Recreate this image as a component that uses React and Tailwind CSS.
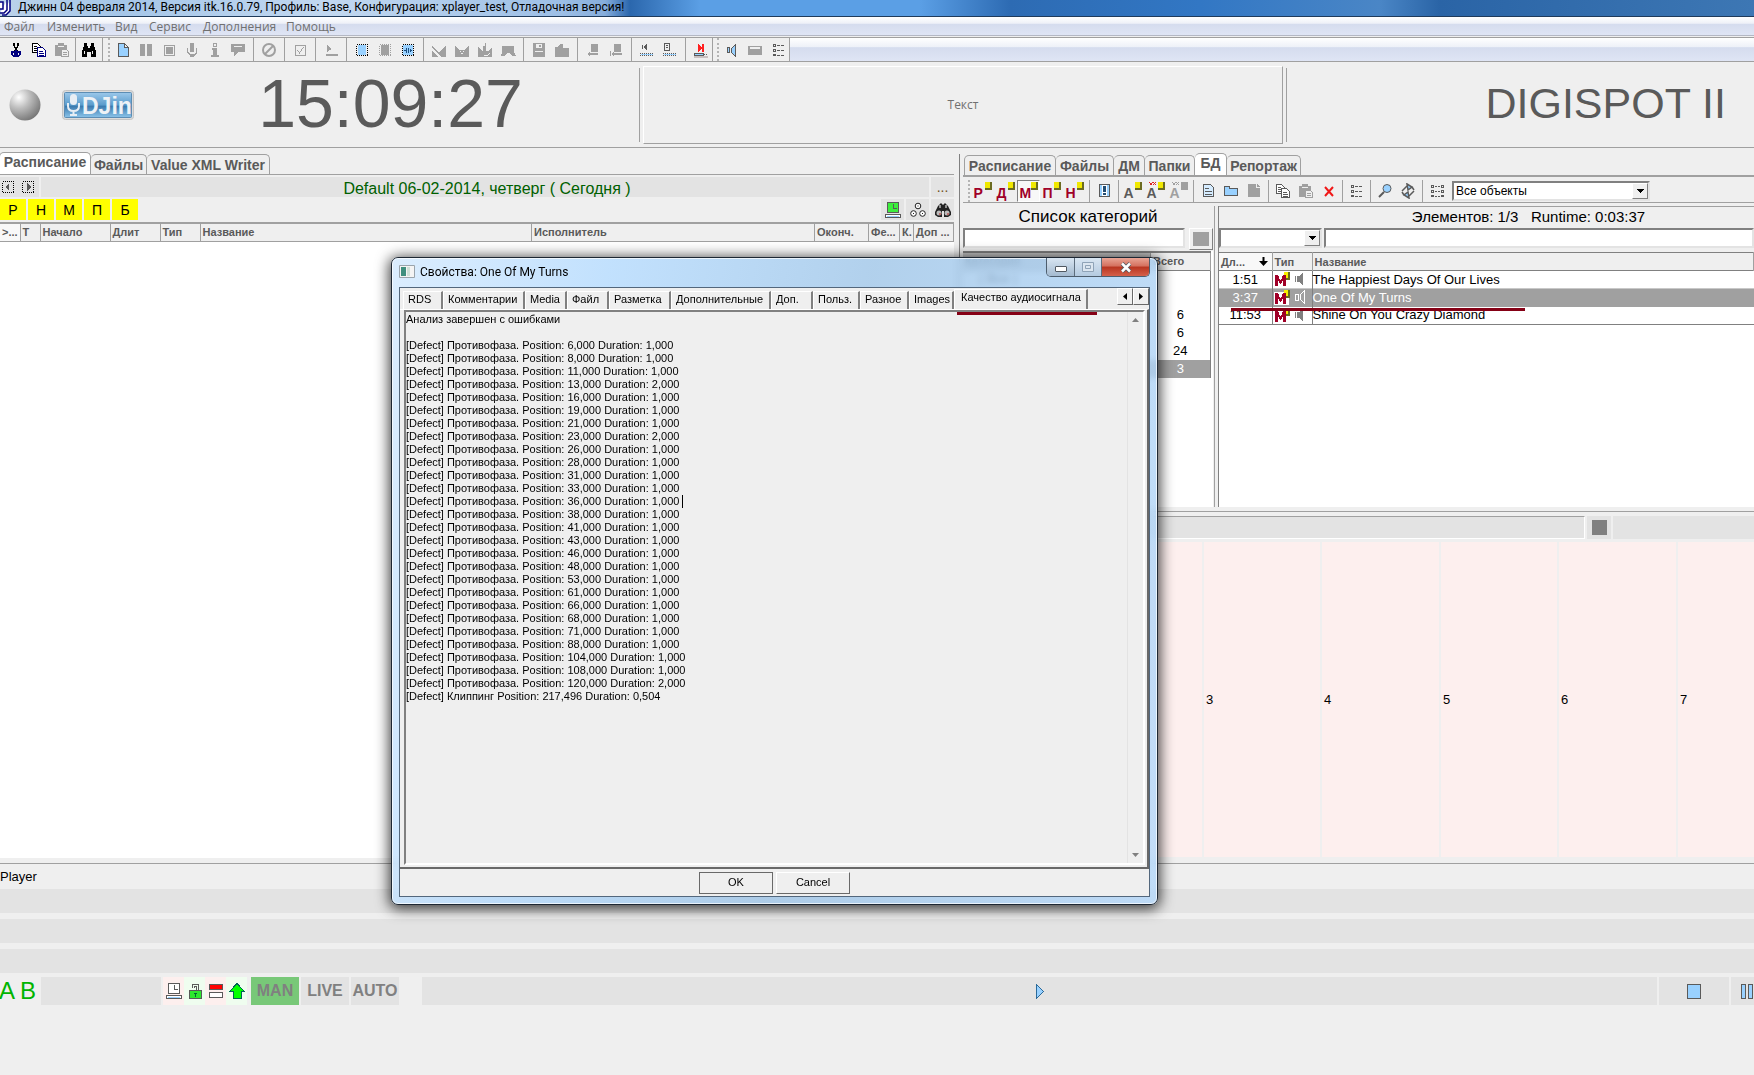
import clsx from "clsx";

const G = "#a0a0a0";
const D = "#5a5a5a";
const B = "#99d1ff";

// 16x16 toolbar glyphs
const ICONS = {
  cut: (
    <g fill="none" stroke="#000" strokeWidth="1.3">
      <path d="M6 1v3l4 6M10 1v3L6 10" />
      <path stroke="#000080" d="M7 9l-1 1H4v3l1 1h2v-4zM9 9l1 1h2v3l-1 1H9v-4z" />
    </g>
  ),
  copy: (
    <g fill="#fff" stroke="#000" strokeWidth="1">
      <path d="M1.500 1.500h5l3 3v6h-8z" />
      <path d="M3 4.500h3M3 6.500h4M3 8.500h3" />
      <path stroke="#000080" d="M6.500 5.500h5l3 3v6h-8z" />
      <path stroke="#000080" d="M8 9.500h4M8 11.500h5M8 13h5" />
    </g>
  ),
  copyGray: (
    <g fill="#fff" stroke={D} strokeWidth="1">
      <path d="M1.500 1.500h5l3 3v6h-8z" />
      <path d="M3 4.500h3M3 6.500h4M3 8.500h3" />
      <path d="M6.500 5.500h5l3 3v6h-8z" />
      <path d="M8 9.500h4M8 11.500h5M8 13h5" />
    </g>
  ),
  paste: (
    <g>
      <path fill={G} d="M1 3h3V1h6v2h3v11H1z" />
      <path fill="#efefef" d="M4 4h6v1H4z" />
      <path fill="#efefef" stroke={G} d="M7.500 7.500h5l2 2v5h-7z" />
      <path stroke={G} d="M9 10.500h4M9 12.500h4" />
    </g>
  ),
  find: (
    <path d="M3 1h3v3h1v2h2V4h1V1h3v3l2 5v6h-5v-5H6v5H1V9l2-5zM3 9v3h1V9zM11 9v3h1V9z" fillRule="evenodd" />
  ),
  file: <path fill={B} stroke={D} d="M3.500 1.500h6l4 4v9h-10z M9.500 1.500v4h4" />,
  pause: <path fill={G} d="M2 2h5v12H2zM9 2h5v12H9z" />,
  stop: (
    <g>
      <path fill="none" stroke={G} d="M3.500 3.500h10v10h-10z" />
      <path fill={G} d="M5 5h7v7H5z" />
    </g>
  ),
  mic: (
    <g fill={G}>
      <path d="M6 1h4v9H6z" />
      <path d="M3 6h1v4l2 2h4l2-2V6h1v5l-3 3v1H6v-1l-3-3z" />
    </g>
  ),
  info: <path fill={G} d="M6 1h4v4H6zM7 2v2h2V2zM5 6h5v7h2v2H4v-2h2V8H5z" fillRule="evenodd" />,
  comment: <path fill={G} d="M1 2h14v8H8l-4 5v-5H1zM4 4v1h8V4z" fillRule="evenodd" />,
  no: (
    <g fill="none" stroke={G} strokeWidth="2" shapeRendering="auto">
      <circle cx="8" cy="8" r="6" />
      <path d="M4 12l8-8" />
    </g>
  ),
  check: <path fill="none" stroke={G} d="M3.500 3.500h10v10h-10zM5.500 8l2 3 4-6" />,
  prompt: <path fill={G} d="M4 3l5 4-5 3zM3 12h12v2H3z" />,
  blockBlue: (
    <g>
      <path fill={B} d="M4 3h8v10H4z" />
      <path fill="none" stroke="#000" strokeDasharray="1 1" d="M2.500 2.500h11v11h-11z" />
    </g>
  ),
  blockGray: (
    <g>
      <path fill={G} d="M4 3h8v10H4z" />
      <path fill="none" stroke={G} strokeDasharray="1 1" d="M2.500 2.500h11v11h-11z" />
    </g>
  ),
  blockWave: (
    <g>
      <path fill={B} d="M3 3h10v10H3z" />
      <path fill="none" stroke="#000" strokeDasharray="1 1" d="M2.500 2.500h11v11h-11z" />
      <path fill="none" stroke="#1c4f80" d="M4 8.500h2M6.500 6v5M8.500 6v5M10.500 7v3M11 8.500h1" />
    </g>
  ),
  fadeIn: <path fill={G} d="M1 4l7 6 7-6v11h-4L1 6zM1 9v6h7z" />,
  fadeMix: <path fill={G} d="M1 4l4 3v1h6V7l4-3v11H1zM6 9v1h1V9zM9 9v1h1V9zM7 11v1h2v-1z" fillRule="evenodd" />,
  fadeDown: <path fill={G} d="M1 5l4 4h1V4h2V1h1v8h2l4-4v10H1zM4 11l3 3h3l3-3-3 2H7z" fillRule="evenodd" />,
  fadeTalk: <path fill={G} d="M2 4h12v6l2 4h-4l-2-3H7l-3 3H1l1-4z" />,
  save: <path fill={G} d="M2 1h12v14H2zM5 2v4h6V2zM8 3h2v2H8zM4 9v1h8V9z" fillRule="evenodd" />,
  bag: <path fill={G} d="M1 5h3l2-3h3v4h6v9H1z" />,
  stepOut: <path fill={G} d="M6 2h7v8H6zM2 12l3-2v1h8v2H5v1z" />,
  stepIn: <path fill={G} d="M6 2h7v8H6zM2 9h1v3l3-2v1h8v2H6v1l-3-2v2H2z" />,
  soundRow: (
    <g>
      <path fill={D} d="M3 3h1v4H3zM5 4l3-3v8L5 6z" />
      <path stroke={D} strokeDasharray="1 1" d="M1 11.500h14M1 13.500h14" />
      <path stroke={B} d="M2 12.500h12" />
    </g>
  ),
  listRow: (
    <g>
      <path fill="none" stroke={D} d="M2.500 1.500h5v7h-5zM4 3.500h2M4 5.500h2" />
      <path stroke={D} strokeDasharray="1 1" d="M1 11.500h14M1 13.500h14" />
      <path stroke={B} d="M2 12.500h12" />
    </g>
  ),
  playNext: (
    <g>
      <path fill="#ff2020" d="M5 2l4 4V2h2v8H9V6l-4 4z" />
      <path fill={B} stroke={D} d="M1.500 11.500h9v2h-9z" />
      <path stroke={D} strokeDasharray="1 1" d="M11 12.500h4" />
      <path fill="#c8c0c0" d="M1 14h14v2H1z" />
    </g>
  ),
  speaker: (
    <g fill={B} stroke={D}>
      <path d="M3.500 5.500h2v5h-2z" />
      <path d="M7.500 6.500l4-4v12l-4-4z" />
    </g>
  ),
  keyboard: <path fill={G} d="M1 4h14v9H1zM3 5v2h10V5z" fillRule="evenodd" />,
  list: (
    <g fill="none" stroke={D}>
      <path d="M3.500 2.500h2v2h-2zM3.500 7.500h2v2h-2zM3.500 12.500h2v1h-2z" />
      <path d="M7 3.500h3M11 3.500h3M7 8.500h3M11 8.500h3M7 13h3M11 13h3" />
    </g>
  ),
  alert: (
    <g>
      <path fill={B} stroke={D} d="M3.500 1.500h10v12h-10z" />
      <path fill="#fff" d="M6 2h5v11H6z" />
      <path fill="#234d72" d="M7 3h3v6H7zM7 10h3v2H7z" />
    </g>
  ),
  doc: (
    <g>
      <path fill="#d5ecff" stroke={D} d="M3.500 1.500h7l3 3v9h-10z" />
      <path stroke={D} d="M5 5.500h4M5 8.500h7M5 11.500h7" />
    </g>
  ),
  folder: <path fill={B} stroke={D} d="M1.500 12.500v-9h5v2h8v7z" />,
  fileGray: <path fill={G} d="M2 1h8v4h4v9H2zM11 1l3 3h-3z" />,
  remove: <path fill="none" stroke="#f01818" strokeWidth="2" shapeRendering="auto" d="M4 4l8 9M12 4l-8 9" />,
  zoom: (
    <g shapeRendering="auto">
      <circle cx="10" cy="5.500" r="4" fill={B} stroke={D} />
      <path stroke={D} strokeWidth="2" d="M7 9l-5 5" />
    </g>
  ),
  refresh: (
    <g fill={B} stroke={D} strokeWidth="1.500" shapeRendering="auto">
      <path fill="none" d="M2 8l5-5M14 8l-5 5" />
      <path d="M7 1l5 3-4 3zM9 15l-5-3 4-3z" />
      <path fill="none" d="M12 4l2 3M4 12L2 9" />
    </g>
  ),
  grid: (
    <g fill="none" stroke={D}>
      <path d="M2.500 2.500h2v2h-2zM2.500 7.500h2v2h-2zM2.500 12.500h2v1h-2zM12.500 2.500h2v2h-2zM12.500 7.500h2v2h-2zM12.500 12.500h2v1h-2z" />
      <path strokeDasharray="2 1" d="M6 3.500h6M6 8.500h6M6 13h6" />
    </g>
  ),
  prev: (
    <g>
      <path fill="none" stroke="#000" strokeDasharray="1 1" d="M2.500 2.500h11v11h-11z" />
      <path fill={D} d="M9 4v8L5 8z" />
    </g>
  ),
  next: (
    <g>
      <path fill="none" stroke="#000" strokeDasharray="1 1" d="M2.500 2.500h11v11h-11z" />
      <path fill={D} d="M7 4v8l4-4z" />
    </g>
  ),
  clockGreen: (
    <g>
      <path fill="#3cee3c" stroke={D} d="M2.500.5h11v10h-11z" />
      <path fill="none" stroke={D} d="M8.500 2v4H12" />
      <path fill="#fff" stroke={D} d="M.5 12.500h15v3H.5z" />
      <path fill={B} d="M2 14h12v1H2z" />
    </g>
  ),
  clockWhite: (
    <g>
      <path fill="#fff" stroke={D} d="M2.500.5h11v10h-11z" />
      <path fill="none" stroke={D} d="M8.500 2v4H12" />
      <path fill="#fff" stroke={D} d="M.5 12.500h15v3H.5z" />
      <path fill={B} d="M2 14h12v1H2z" />
    </g>
  ),
  reels: (
    <g fill="#fff" stroke="#222" shapeRendering="auto">
      <circle cx="8" cy="4" r="2.800" />
      <circle cx="3.500" cy="11.500" r="2.800" />
      <circle cx="12.500" cy="11.500" r="2.800" />
      <path d="M8 3.500v1M3.500 11v1M12.500 11v1" />
    </g>
  ),
  binoculars: (
    <g shapeRendering="auto">
      <path fill="#222" d="M3 4l3-3 2 2 2-2 3 3 3 6v3l-3 2H9V9H7v6H3L0 13v-3z" />
      <circle cx="4" cy="11" r="2.500" fill="#bbb" />
      <circle cx="12" cy="11" r="2.500" fill="#bbb" />
      <path stroke="#fff" d="M5 3v3M11 3v3" />
      <path stroke="#b22" d="M5 11v2M13 11v2" />
    </g>
  ),
  lock: (
    <g>
      <path fill="none" stroke={D} d="M5.500 4.500v-3h6v6M7.500 4.500v-1h2v4" />
      <path fill="#2de82d" stroke={D} d="M2.500 7.500h12v8h-12z" />
      <path fill="#063" d="M7 10h3v1H9v3H8v-3H7z" />
    </g>
  ),
  bars: (
    <g stroke={D}>
      <path fill="#f00" d="M1.500 1.500h13v5h-13z" />
      <path fill="#fff" d="M1.500 9.500h13v5h-13z" />
    </g>
  ),
  up: <path fill="#0f0" stroke="#065" d="M8 .5l7.500 8H12v7H4.500v-7h-4z" />,
  play: <path fill={B} stroke="#2a6a9a" d="M4.500 1.500l7 7-7 7z" />,
  stopBlue: <path fill={B} stroke={D} d="M1.500 1.500h13v14h-13z" />,
  pauseBlue: <path fill={B} stroke={D} d="M1.500 1.500h4v14h-4zM8.500 1.500h4v14h-4z" />,
};

const Icon = ({ name }) => (
  <svg viewBox="0 0 16 16" className="w-4 h-4 shrink-0" shapeRendering="crispEdges" aria-hidden="true">
    {ICONS[name]}
  </svg>
);

const ToolButton = ({ name, label }) => (
  <button type="button" aria-label={label || name} className="w-[23px] h-[22px] shrink-0 flex items-center justify-center">
    <Icon name={name} />
  </button>
);

const TOOL_COLORS = { red: "text-[#a00028]", dark: "text-[#5a5a5a]", gray: "text-[#a0a0a0]" };

const LetterIcon = ({ letter, tone, mark }) => (
  <span className="relative w-[18px] h-5 block">
    <span className={clsx("block pt-1 text-left text-sm leading-4 font-bold", TOOL_COLORS[tone])}>{letter}</span>
    {mark && (
      <svg viewBox="0 0 8 4" className="absolute left-0.5 top-px w-2 h-1" aria-hidden="true">
        <path stroke={tone === "gray" ? G : "#e02020"} d="M0 0l3 3M4 0L1 3M4 0l3 3M7 0L4 3" />
      </svg>
    )}
    <span
      className={clsx(
        "absolute right-0 top-px w-[7px] h-2 border-r-2 border-b-2",
        tone === "gray" ? "bg-[#a0a0a0] border-[#a0a0a0]" : "bg-[#f0e800] border-[#6b6b20]"
      )}
    />
  </span>
);

const Sep = ({ className = "w-2" }) => (
  <span className={clsx("flex justify-center self-stretch shrink-0", className)}>
    <span className="w-px bg-[#a0a0a0]" />
  </span>
);

const Grip = () => <span className="w-[3px] self-stretch mx-1 border-l-2 border-dotted border-[#b4b4b4] shrink-0" />;

const MAIN_TOOLS = [
  ["file", "pause", "stop", "mic", "info", "comment"],
  ["no"],
  ["check"],
  ["prompt"],
  ["blockBlue", "blockGray", "blockWave"],
  ["fadeIn", "fadeMix", "fadeDown", "fadeTalk"],
  ["save", "bag"],
  ["stepOut", "stepIn"],
  ["soundRow", "listRow"],
  ["playNext"],
];

const MENU = [
  ["Файл", "w-[43px]"],
  ["Изменить", "w-[68px]"],
  ["Вид", "w-[34px]"],
  ["Сервис", "w-[54px]"],
  ["Дополнения", "w-[83px]"],
  ["Помощь", "w-[60px]"],
];

const TopBars = () => (
  <header>
    <div className="h-[17px] flex items-center overflow-hidden border-b border-[#1f3b5c] bg-[linear-gradient(90deg,#bcd3ea_0,#a5c6e8_120px,#c2d8f0_330px,#9dbfe6_560px,#86addb_605px,#2b67ad_630px,#5b9fe5_700px,#5b9fe5_920px,#2d6bb3_1010px,#3277c4_1200px,#4a86c6_1380px,#2a64a6_1440px,#3d77b4_100%)]">
      <svg viewBox="0 0 14 16" className="w-3.5 h-4 shrink-0 mr-1" aria-hidden="true">
        <path fill="#fff" stroke="#000080" strokeWidth="1.500" d="M0 2h3v7H0M7 0v10l-3 3H0M10 0v11l-4 4H2" />
      </svg>
      <h1 className="pb-0.5 font-[Roboto,'Noto_Sans',sans-serif] text-xs leading-3 whitespace-nowrap">
        Джинн 04 февраля 2014, Версия itk.16.0.79, Профиль: Base, Конфигурация: xplayer_test, Отладочная версия!
      </h1>
    </div>
    <nav className="h-[19px] pl-1 pt-0.5 flex items-center border-b border-[#b4b8c4] bg-[linear-gradient(#fff,#eef1f8_35%,#d5dcee_40%,#dfe5f5)] font-['Open_Sans','Noto_Sans',sans-serif] text-xs text-[#707070]">
      {MENU.map(([label, width]) => (
        <button key={label} type="button" className={clsx("text-left leading-4 shrink-0", width)}>
          {label}
        </button>
      ))}
    </nav>
    <div className="mt-px h-[25px] flex items-stretch border-y border-[#a0a0a0]">
      <div className="pl-1 flex items-center">
        <ToolButton name="cut" />
        <ToolButton name="copy" />
        <ToolButton name="paste" />
        <Sep className="w-1" />
        <ToolButton name="find" />
        <Sep className="w-1" />
        <Grip />
      </div>
      <div className="-ml-1 flex items-center border-r border-[#a0a0a0]">
        {MAIN_TOOLS.map((group, i) => (
          <div key={group[0]} className="flex items-center self-stretch">
            {i > 0 && <Sep />}
            {group.map((name) => (
              <ToolButton key={name} name={name} />
            ))}
          </div>
        ))}
      </div>
      <div className="flex items-center border-r border-[#a0a0a0]">
        <Grip />
        <span className="-ml-1 flex">
          <ToolButton name="speaker" />
          <ToolButton name="keyboard" />
          <ToolButton name="list" />
        </span>
      </div>
      <div className="flex-1 bg-[linear-gradient(#fff,#eef1f8_38%,#d5dcee_42%,#dfe5f5)]" />
    </div>
  </header>
);

const Logo = () => (
  <svg viewBox="0 0 72 30" className="w-[72px] h-[30px] shrink-0" role="img" aria-label="DJin">
    <defs>
      <linearGradient id="logo" x1="0" y1="0" x2="0" y2="1">
        <stop offset="0" stopColor="#9cc8ea" />
        <stop offset=".5" stopColor="#5a9ccc" />
        <stop offset=".55" stopColor="#3a7aae" />
        <stop offset="1" stopColor="#8cc4ea" />
      </linearGradient>
    </defs>
    <rect x=".5" y=".5" width="71" height="29" rx="3" fill="#dcdcdc" stroke="#c4c4c4" />
    <rect x="2.500" y="2.500" width="67" height="25" rx="1" fill="url(#logo)" stroke="#5c8db4" />
    <rect x="8" y="4" width="7" height="11" rx="3.500" fill="#e8eef4" />
    <path fill="none" stroke="#e8eef4" strokeWidth="2" d="M6 13v3q0 5 5.500 5t5.500-5v-3M11.500 21v4M8 25h7" />
    <text x="20" y="24" fontFamily="Liberation Sans" fontWeight="bold" fontSize="23" fill="#eef2f6">
      DJin
    </text>
  </svg>
);

const Clock = () => (
  <section className="mt-px h-[85px] flex items-stretch border-b border-[#a0a0a0]">
    <div className="w-[640px] my-[5px] pl-2 flex items-center border-r border-[#a0a0a0]">
      <svg viewBox="0 0 34 34" className="w-[34px] h-[34px] shrink-0" aria-hidden="true">
        <defs>
          <radialGradient id="ball" cx=".3" cy=".25" r=".8">
            <stop offset="0" stopColor="#fff" />
            <stop offset=".45" stopColor="#bdbdbd" />
            <stop offset="1" stopColor="#777" />
          </radialGradient>
        </defs>
        <circle cx="17" cy="17" r="15.500" fill="url(#ball)" />
      </svg>
      <div className="ml-5">
        <Logo />
      </div>
      <time className="flex-1 pl-2 pb-1 text-center text-[68px] leading-none text-[#5a5a5a]">15:09:27</time>
    </div>
    <div className="flex-1 ml-[3px] mt-[3px] mb-[3px] flex items-center justify-center border border-t-white border-l-white border-r-[#a0a0a0] border-b-[#a0a0a0] font-['Open_Sans','Noto_Sans',sans-serif] text-xs text-[#707070]">
      Текст
    </div>
    <div className="w-[468px] my-[5px] ml-[3px] pr-7 pb-1 flex items-center justify-end border-l border-[#a0a0a0] text-[43px] leading-none text-[#5a5a5a] whitespace-nowrap">
      DIGISPOT II
    </div>
  </section>
);

const Tab = ({ label, active, width }) => (
  <button
    type="button"
    role="tab"
    aria-selected={!!active}
    className={clsx(
      "border border-b-0 border-[#a0a0a0] rounded-t-[5px] font-bold text-sm leading-4 text-[#5a5a5a] shrink-0 whitespace-nowrap",
      width,
      active ? "bg-white h-[22px] pb-1" : "h-5"
    )}
  >
    {label}
  </button>
);

const TH = "border-r border-[#a0a0a0] text-left font-bold text-[11px] leading-4 text-[#5a5a5a] p-0 pl-0.5 overflow-hidden whitespace-nowrap";

const SCHEDULE_COLS = [
  [">...", "w-[20px]"],
  ["Т", "w-[20px]"],
  ["Начало", "w-[70px]"],
  ["Длит", "w-[50px]"],
  ["Тип", "w-[40px]"],
  ["Название", ""],
  ["Исполнитель", "w-[283px]"],
  ["Оконч.", "w-[54px]"],
  ["Фе...", "w-[31px]"],
  ["К.", "w-[14px]"],
  ["Доп ...", "w-[40px]"],
];

const Schedule = () => (
  <section className="min-w-0 flex flex-col pb-[5px] pr-[5px]">
    <div role="tablist" className="pt-1 h-[27px] flex items-end border-b border-[#a0a0a0]">
      <Tab label="Расписание" active width="w-[92px] -ml-px" />
      <Tab label="Файлы" width="w-[56px] border-l-0" />
      <Tab label="Value XML Writer" width="w-[123px] border-l-0" />
    </div>
    <div className="mt-0.5 h-5 flex gap-0.5">
      <div className="w-[39px] bg-[#e3e3e3] flex items-center">
        <button type="button" aria-label="prev day" className="w-5"><Icon name="prev" /></button>
        <button type="button" aria-label="next day" className="w-4"><Icon name="next" /></button>
      </div>
      <h2 className="flex-1 bg-[#e3e3e3] pl-1 text-center text-base leading-5 pt-0.5 text-[#006000] whitespace-nowrap">
        Default 06-02-2014, четверг ( Сегодня )
      </h2>
      <button type="button" className="w-[23px] bg-[#e3e3e3] text-sm leading-5 text-[#705020]">...</button>
    </div>
    <div className="mt-0.5 h-[21px] flex gap-0.5 text-sm">
      <span className="-mr-0.5 flex gap-0.5">
        {["Р", "Н", "М", "П", "Б"].map((letter) => (
          <button key={letter} type="button" className="w-[26px] bg-[#ffff00]">{letter}</button>
        ))}
      </span>
      <span className="flex-1" />
      {["clockGreen", "reels", "binoculars"].map((name) => (
        <button key={name} type="button" aria-label={name} className="w-[23px] bg-[#e3e3e3] flex items-center justify-center">
          <Icon name={name} />
        </button>
      ))}
    </div>
    <div className="mt-0.5 flex-1 bg-white">
      <table className="w-full table-fixed border-collapse border-t-2 border-b border-[#a0a0a0]">
        <thead>
          <tr className="h-[18px] bg-[#efefef]">
            {SCHEDULE_COLS.map(([label, width], i) => (
              <th key={label} className={clsx(TH, width, i === 0 && "bg-[#f8f8f8]")}>{label}</th>
            ))}
          </tr>
        </thead>
      </table>
    </div>
  </section>
);

const SUNK = "bg-white border-2 border-t-[#808080] border-l-[#808080] border-r-[#e3e3e3] border-b-[#e3e3e3]";

const Combo = ({ label, options, className }) => (
  <div className={clsx("flex shrink-0 h-5", SUNK, className)}>
    <select aria-label={label} className="flex-1 min-w-0 appearance-none bg-white pl-0.5 text-xs leading-4 outline-none">
      {options.map((o) => (
        <option key={o}>{o}</option>
      ))}
    </select>
    <span className="w-4 flex items-center justify-center bg-[#efefef] border border-t-white border-l-white border-r-[#808080] border-b-[#808080]">
      <svg viewBox="0 0 7 4" className="w-[7px] h-1" shapeRendering="crispEdges" aria-hidden="true"><path d="M0 0h7L3.500 4z" /></svg>
    </span>
  </div>
);

const LetterTool = ({ pressed, ...props }) => (
  <button
    type="button"
    className={clsx(
      "w-[23px] h-[22px] shrink-0 flex items-center justify-center",
      pressed && "bg-[#f8f8f8] border border-t-[#808080] border-l-[#808080] border-r-white border-b-white"
    )}
  >
    <LetterIcon {...props} />
  </button>
);

const BaseToolbar = () => (
  <div className="h-[26px] pl-px pt-[3px] flex items-center border-b border-[#a0a0a0]">
    <Grip />
    <span className="-ml-1 flex">
      <LetterTool letter="Р" tone="red" />
      <LetterTool letter="Д" tone="red" />
      <LetterTool letter="М" tone="red" pressed />
      <LetterTool letter="П" tone="red" />
      <LetterTool letter="Н" tone="red" />
    </span>
    <Sep className="w-1.5" />
    <ToolButton name="alert" />
    <Sep className="w-1.5" />
    <LetterTool letter="А" tone="dark" />
    <LetterTool letter="А" tone="dark" mark />
    <LetterTool letter="А" tone="gray" mark />
    <Sep className="w-1.5" />
    <ToolButton name="doc" />
    <ToolButton name="folder" />
    <ToolButton name="fileGray" />
    <Sep className="w-1.5" />
    <ToolButton name="copyGray" label="copy" />
    <ToolButton name="paste" />
    <ToolButton name="remove" />
    <Sep className="w-1" />
    <ToolButton name="list" />
    <Sep className="w-1.5" />
    <ToolButton name="zoom" />
    <ToolButton name="refresh" />
    <Sep className="w-1.5" />
    <ToolButton name="grid" />
    <Combo label="Объекты" options={["Все объекты"]} className="w-[198px] ml-1" />
  </div>
);

const CATEGORIES = [
  ["( Все )", ""],
  ["", ""],
  ["", "6"],
  ["", "6"],
  ["", "24"],
  ["", "3"],
];

const Categories = () => (
  <div className="w-[250px] shrink-0 flex flex-col">
    <h2 className="h-[22px] text-center text-[17px] leading-[22px]">Список категорий</h2>
    <div className="h-[22px] flex gap-1">
      <input aria-label="Фильтр категорий" className={clsx("flex-1 min-w-0 h-5", SUNK)} />
      <button type="button" aria-label="Очистить" className="w-6 p-[3px] border border-white border-r-[#808080] border-b-[#808080]">
        <span className="block w-full h-full bg-[#a0a0a0]" />
      </button>
    </div>
    <div className="flex-1 mt-px bg-white">
      <table className="w-[248px] table-fixed border-collapse text-[13px] leading-4 border-t-2 border-r border-[#808080]">
        <thead>
          <tr className="h-[18px] bg-[#efefef] border-b border-[#808080]">
            <th className={clsx(TH, "bg-[#c8c8c8]")}>Категория</th>
            <th className={clsx(TH, "w-[60px]")}>Всего</th>
          </tr>
        </thead>
        <tbody>
          {CATEGORIES.map(([name, total], i) => (
            <tr key={i} className={clsx("h-[18px]", i === 5 && "bg-[#a0a0a0] text-white")}>
              <td className="p-0 pl-4">{name}</td>
              <td className="p-0 text-center">{total}</td>
            </tr>
          ))}
        </tbody>
      </table>
    </div>
  </div>
);

const TRACKS = [
  ["1:51", "The Happiest Days Of Our Lives"],
  ["3:37", "One Of My Turns", true],
  ["11:53", "Shine On You Crazy Diamond"],
];

const TrackType = ({ selected }) => (
  <svg viewBox="0 0 38 17" className="w-[38px] h-[17px] block" shapeRendering="crispEdges" aria-label="M">
    {selected && <path fill="#fff" d="M1 3h15v13H1z" />}
    <path fill="#f8f000" d="M11 1h5v7h-5z" />
    <path fill="#6b6b20" d="M15 1h2v8h-4V7h2z" />
    <path fill="#a00028" d="M2 15V4h3l2 5h1l2-5h3v11h-3V9l-2 4H7L5 9v6z" />
    {selected ? (
      <path fill="none" stroke="#fff" d="M22.500 5.500h3v6h-3zM27.500 5.500l4-4v13l-4-4z" />
    ) : (
      <path fill="#808080" d="M22 5h1v6h-1zM24 5h2v6h-2zM26 5l4-3v12l-4-3z" />
    )}
  </svg>
);

const TrackList = () => (
  <div className="flex-1 min-w-0 flex flex-col border-l border-[#808080]">
    <h2 className="h-5 border-t border-[#a0a0a0] pl-[84px] text-center text-[15px] leading-5 whitespace-pre">
      {"Элементов: 1/3   Runtime: 0:03:37"}
    </h2>
    <div className="mt-0.5 h-6 flex gap-0.5 overflow-hidden">
      <Combo label="Поле" options={[""]} className="w-[103px]" />
      <input aria-label="Поиск" className={clsx("flex-1 min-w-0 h-5", SUNK)} />
    </div>
    <div className="relative flex-1 bg-white">
      <table className="w-full table-fixed border-collapse border-t border-[#808080] text-[13px] leading-4">
        <thead>
          <tr className="h-[18px] bg-[#efefef] border-b border-[#808080]">
            <th className={clsx(TH, "w-[53px] bg-[#f8f8f8]")}>
              <span className="flex justify-between items-center pr-1">
                Дл...
                <svg viewBox="0 0 9 9" className="w-[9px] h-[9px]" aria-hidden="true"><path d="M3.500 0h2v4H9L4.500 9 0 4h3.500z" /></svg>
              </span>
            </th>
            <th className={clsx(TH, "w-[40px]")}>Тип</th>
            <th className={TH}>Название</th>
          </tr>
        </thead>
        <tbody>
          {TRACKS.map(([time, title, selected]) => (
            <tr key={title} className={clsx("h-[18px]", selected ? "bg-[#a0a0a0] text-white" : "border-b border-[#c8c8c8] last:border-[#808080]")}>
              <td className="p-0 text-center border-r border-[#808080]">{time}</td>
              <td className="p-0 border-r border-[#808080]"><TrackType selected={selected} /></td>
              <td className="p-0 whitespace-nowrap">{title}</td>
            </tr>
          ))}
        </tbody>
      </table>
      <span className="absolute left-3 top-14 w-[294px] h-[3px] bg-[#850015]" />
    </div>
  </div>
);

const Timeline = () => (
  <div className="h-[352px] flex flex-col border-t border-[#a0a0a0] pt-1">
    <div className="h-[23px] flex gap-0.5">
      <div className="w-[622px] shrink-0 bg-[#e3e3e3] border border-t-[#a0a0a0] border-white" />
      <button type="button" aria-label="stop" className="w-6 shrink-0 bg-[#e3e3e3] flex items-center justify-center">
        <span className="w-[15px] h-[15px] bg-[#808080]" />
      </button>
      <div className="flex-1 bg-[#e3e3e3]" />
    </div>
    <div className="mt-[3px] mb-1.5 pl-0.5 flex-1 grid grid-cols-[repeat(4,118px_119px)] overflow-hidden bg-[#fdefee] text-[13px]">
      {[1, 2, 3, 4, 5, 6, 7].map((n) => (
        <span key={n} className="border-l-2 border-[#efefef] pl-0.5 flex items-center">{n}</span>
      ))}
    </div>
  </div>
);

const Base = () => (
  <section className="mt-1.5 min-w-0 flex flex-col border-l border-[#808080] pl-[3px]">
    <div role="tablist" className="h-[23px] pl-px flex items-end border-b-2 border-[#a0a0a0]">
      <Tab label="Расписание" width="w-[92px]" />
      <Tab label="Файлы" width="w-[58px] border-l-0" />
      <Tab label="ДМ" width="w-[31px] border-l-0" />
      <Tab label="Папки" width="w-[50px] border-l-0" />
      <Tab label="БД" active width="w-[32px] border-l-0" />
      <Tab label="Репортаж" width="w-[74px] border-l-0" />
    </div>
    <BaseToolbar />
    <div className="flex-1 mt-[3px] mb-1 flex">
      <Categories />
      <span className="w-[3px] border-l border-[#a0a0a0] ml-px mr-px" />
      <TrackList />
    </div>
    <Timeline />
  </section>
);

const Player = () => (
  <footer className="border-t border-[#a0a0a0] pt-1 pb-[70px]">
    <h2 className="h-[21px] text-[13px] leading-[18px]">Player</h2>
    <div className="space-y-1.5">
      <div className="h-6 bg-[#e3e3e3]" />
      <div className="h-6 bg-[#e3e3e3]" />
      <div className="h-6 bg-[#e3e3e3]" />
    </div>
    <div className="mt-1 h-7 flex items-stretch">
      <div className="w-[41px] flex justify-between pr-1 -ml-px mr-px text-2xl leading-7 text-[#00b400]">
        <span>A</span>
        <span>B</span>
      </div>
      <div className="w-[120px] bg-[#e3e3e3]" />
      <div className="ml-0.5 flex">
        {["clockWhite", "lock", "bars", "up"].map((name, i) => (
          <button
            key={name}
            type="button"
            aria-label={name}
            className={clsx("w-[21px] flex items-center justify-center", i % 2 ? "bg-[#effdef]" : "bg-[#fdefee]")}
          >
            <Icon name={name} />
          </button>
        ))}
      </div>
      <div className="ml-1 flex gap-0.5 text-base font-bold text-[#808080]">
        <button type="button" className="w-12 bg-[#78c878]">MAN</button>
        <button type="button" className="w-12 bg-[#e3e3e3]">LIVE</button>
        <button type="button" className="w-12 bg-[#e3e3e3]">AUTO</button>
      </div>
      <div className="ml-[23px] flex-1 flex gap-0.5">
        <button type="button" aria-label="play" className="flex-1 bg-[#e3e3e3] flex items-center justify-center">
          <Icon name="play" />
        </button>
        <button type="button" aria-label="stop" className="w-[70px] bg-[#e3e3e3] flex items-center justify-center">
          <Icon name="stopBlue" />
        </button>
        <button type="button" aria-label="pause" className="w-[23px] pl-[9px] bg-[#e3e3e3] flex items-center overflow-hidden">
          <Icon name="pauseBlue" />
        </button>
      </div>
    </div>
  </footer>
);

const PHASE_DEFECTS = [
  ["6,000", 1], ["8,000", 1], ["11,000", 1], ["13,000", 2], ["16,000", 1], ["19,000", 1], ["21,000", 1],
  ["23,000", 2], ["26,000", 1], ["28,000", 1], ["31,000", 1], ["33,000", 1], ["36,000", 1], ["38,000", 1],
  ["41,000", 1], ["43,000", 1], ["46,000", 1], ["48,000", 1], ["53,000", 1], ["61,000", 1], ["66,000", 1],
  ["68,000", 1], ["71,000", 1], ["88,000", 1], ["104,000", 1], ["108,000", 1], ["120,000", 2],
];

const REPORT = [
  "Анализ завершен с ошибками",
  "",
  ...PHASE_DEFECTS.map(([pos, dur]) => `[Defect] Противофаза. Position: ${pos} Duration: ${dur},000`),
  "[Defect] Клиппинг Position: 217,496 Duration: 0,504",
].join("\n");

const DIALOG_TABS = [
  ["RDS", "w-[40px]"],
  ["Комментарии", "w-[82px]"],
  ["Media", "w-[42px]"],
  ["Файл", "w-[42px]"],
  ["Разметка", "w-[62px]"],
  ["Дополнительные", "w-[100px]"],
  ["Доп.", "w-[42px]"],
  ["Польз.", "w-[47px]"],
  ["Разное", "w-[49px]"],
  ["Images", "w-[45px] border-r-0"],
];

const RAISED = "bg-[#efefef] border border-t-white border-l-white border-r-[#696969] border-b-[#696969]";

const Dialog = () => (
  <div
    role="dialog"
    aria-label="Свойства"
    className="absolute left-[391px] top-[257px] w-[767px] rounded-[7px] border border-[#1d2733] overflow-clip backdrop-blur-[3px] bg-[linear-gradient(100deg,#d3e9fed0,#b4dafdd0_25%,#a0c6e8d0_55%,#b5d8fad0)] shadow-[0_2px_14px_2px_rgba(0,0,0,0.75)]"
  >
    <div className="p-1.5 pt-0 border border-white/70 rounded-[6px]">
      <div className="h-7 flex items-start">
        <svg viewBox="0 0 16 13" className="mt-1.5 w-4 h-[13px]" aria-hidden="true">
          <path fill="#f4f4f4" stroke="#9aa4ac" d="M.5.5h15v12H.5z" />
          <path fill="#3f8f7f" d="M2 2h5v9H2z" />
          <path fill="#cfe0d8" d="M8 2h3v9H8z" />
        </svg>
        <h2 className="ml-[5px] mt-[5px] font-[Roboto,'Noto_Sans',sans-serif] text-xs leading-4">Свойства: One Of My Turns</h2>
        <div className="ml-auto -mt-px h-[19px] flex border border-t-0 border-[#4d5d6d] rounded-b-[5px] overflow-hidden">
          <button type="button" aria-label="Свернуть" className="w-7 flex items-end justify-center pb-1 bg-linear-to-b from-[#d9e6f2] to-[#a4bad0] border-r border-[#5d6d7d]">
            <span className="w-3 h-1.5 bg-white border border-[#505860] rounded-[1px]" />
          </button>
          <button type="button" aria-label="Развернуть" disabled className="w-[27px] flex items-center justify-center bg-linear-to-b from-[#d9e6f2] to-[#b4cae0] border-r border-[#5d6d7d]">
            <svg viewBox="0 0 12 10" className="w-3 h-2.5" aria-hidden="true">
              <path fill="#dce6f0" stroke="#8fa3b7" d="M.5.5h11v9H.5zM3.500 3.500h5v3h-5z" />
            </svg>
          </button>
          <button type="button" aria-label="Закрыть" className="w-[47px] flex items-center justify-center bg-[linear-gradient(#e9a595,#d4705e_45%,#b83520_50%,#d5604a)]">
            <svg viewBox="0 0 12 11" className="w-3 h-[11px]" aria-hidden="true">
              <path stroke="#505860" strokeWidth="4" d="M2 1.500l8 8M10 1.500l-8 8" />
              <path stroke="#fff" strokeWidth="2.500" d="M2 1.500l8 8M10 1.500l-8 8" />
            </svg>
          </button>
        </div>
      </div>
      <div className="bg-[#efefef] border border-[#53677c] text-[11px] leading-[13px]">
        <div role="tablist" className="h-[21px] pl-[3px] flex items-end">
          {DIALOG_TABS.map(([label, width]) => (
            <button
              key={label}
              type="button"
              role="tab"
              aria-selected="false"
              className={clsx("h-[18px] shrink-0 pl-1 pb-0.5 text-left whitespace-nowrap border-t border-l border-white border-r-2 border-r-[#808080]", width)}
            >
              {label}
            </button>
          ))}
          <button type="button" role="tab" aria-selected="true" className="h-5 w-[134px] shrink-0 pl-1.5 pb-1 text-left whitespace-nowrap border-t border-l border-white border-r-2 border-r-[#808080]">
            Качество аудиосигнала
          </button>
          <span className="ml-auto self-start flex">
            <button type="button" aria-label="Назад" className={clsx("w-4 h-[17px] flex items-center justify-center", RAISED)}>
              <svg viewBox="0 0 4 7" className="w-1 h-[7px]" aria-hidden="true"><path d="M4 0v7L0 3.500z" /></svg>
            </button>
            <button type="button" aria-label="Вперед" className={clsx("w-4 h-[17px] flex items-center justify-center", RAISED)}>
              <svg viewBox="0 0 4 7" className="w-1 h-[7px]" aria-hidden="true"><path d="M0 0v7l4-3.500z" /></svg>
            </button>
          </span>
        </div>
        <div className="pl-1 pr-0.5 pb-0.5 border-t border-white border-r-2 border-b-2 border-r-[#696969] border-b-[#696969]">
          <div className="relative h-[555px] flex border-2 border-t-[#808080] border-l-[#808080] border-r-white border-b-white">
            <textarea
              readOnly
              aria-label="Качество аудиосигнала"
              value={REPORT}
              className="flex-1 pt-px resize-none overflow-hidden bg-[#efefef] outline-none whitespace-pre"
            />
            <div className="w-4 flex flex-col justify-between items-center py-1.5 border-l border-[#e3e3e3]">
              <svg viewBox="0 0 7 4" className="w-[7px] h-1" aria-hidden="true"><path fill="#808080" d="M0 4h7L3.500 0z" /></svg>
              <svg viewBox="0 0 7 4" className="w-[7px] h-1" aria-hidden="true"><path fill="#808080" d="M0 0h7L3.500 4z" /></svg>
            </div>
            <span className="absolute left-[276px] top-[183px] w-px h-[13px] bg-black" />
            <span className="absolute left-[551px] top-0 w-[140px] h-[3px] bg-[#850015]" />
          </div>
        </div>
        <div className="h-[27px] flex items-center justify-center gap-[3px]">
          <button type="button" className={clsx("w-[74px] h-[22px] outline outline-[#696969] -outline-offset-1", RAISED)}>OK</button>
          <button type="button" className={clsx("w-[74px] h-[22px]", RAISED)}>Cancel</button>
        </div>
      </div>
    </div>
  </div>
);

const App = () => (
  <div className="relative min-h-screen flex flex-col overflow-hidden bg-[#efefef] text-black font-['Liberation_Sans',Arial,sans-serif]">
    <TopBars />
    <Clock />
    <main className="flex-1 grid grid-cols-[959fr_795fr]">
      <Schedule />
      <Base />
    </main>
    <Player />
    <Dialog />
  </div>
);

export default App;
